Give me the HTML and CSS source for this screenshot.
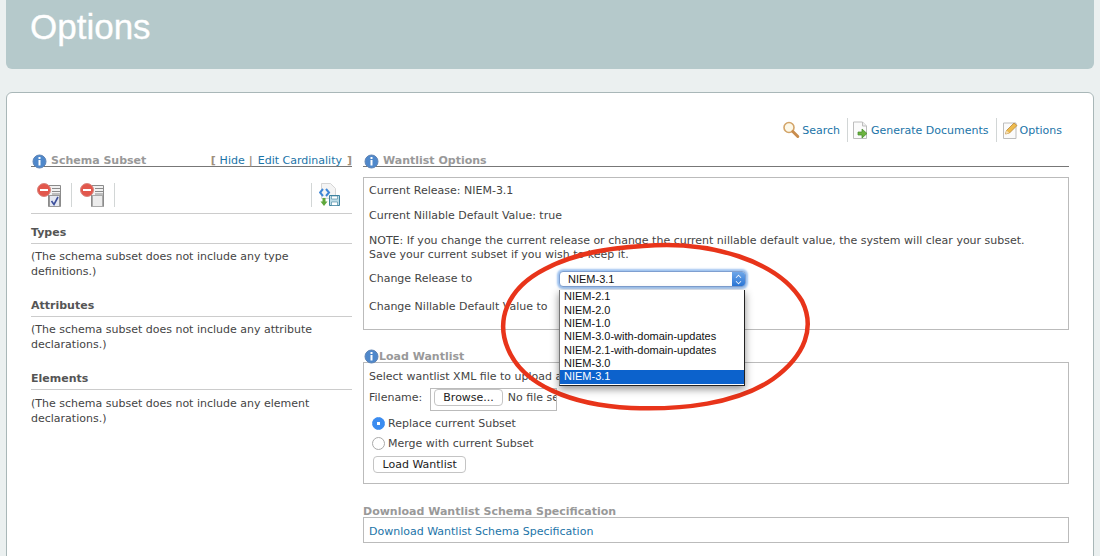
FILE: index.html
```html
<!DOCTYPE html>
<html lang="en">
<head>
    <meta charset="UTF-8">
    <title>Options</title>
    <link rel="stylesheet" href="styles.css">
</head>
<body>
    <div class="banner"><h1>Options</h1></div>

    <div class="panel">
        <div class="topnav">
            <a href="#" class="navlink">
                <svg width="18" height="18" viewBox="0 0 18 18"><circle cx="7" cy="6.500" r="5" fill="#fdf8e8" stroke="#d3a468" stroke-width="1.600"/><path d="M10.800 10.500l5 5" stroke="#c98d4e" stroke-width="3" stroke-linecap="round"/></svg>
                Search
            </a>
            <a href="#" class="navlink sep gen">
                <svg width="17" height="19" viewBox="0 0 17 19"><path d="M1.500 1h9l4 4v12.500h-13z" fill="#fbfbfb" stroke="#bdbdbd"/><path d="M10.500 1v4h4" fill="#eee" stroke="#bdbdbd"/><path d="M6 11h4V8l5 4.500L10 17v-3H6z" fill="#6cb33f" stroke="#3f8a2a" stroke-width=".7"/></svg>
                Generate Documents
            </a>
            <a href="#" class="navlink sep">
                <svg width="16" height="19" viewBox="0 0 16 19"><path d="M1.500 2h12.500v15.500H1.500z" fill="#fbfbfb" stroke="#bdbdbd"/><path d="M3.500 13l1-3.500L12 2l3 2.500-7.500 7.500z" fill="#eebb4d" stroke="#b9873a" stroke-width=".8"/><path d="M3.500 13l1-3.500 2.800 2.500z" fill="#f5dfb5"/></svg>
                Options
            </a>
        </div>

        <div class="columns">
            <div class="left">
                <div class="heading split">
                    <span class="title">
                        <svg class="info" viewBox="0 0 15 15"><circle cx="7.500" cy="7.500" r="6.500" fill="#4f88cb" stroke="#5f84b5"/><rect x="6.500" y="3" width="2" height="2" fill="#fff"/><rect x="6.500" y="6" width="2" height="5.500" fill="#fff"/></svg>
                        Schema Subset
                    </span>
                    <span class="bracket">[ <a href="#">Hide</a><span class="pipe">|</span><a href="#">Edit Cardinality</a><span class="close">]</span></span>
                </div>

                <div class="toolbar">
                    <span class="tool">
                        <svg width="25" height="24" viewBox="0 0 25 24"><path d="M11.500 2.500h12v21h-12z" fill="#f1f1f1" stroke="#8b8b8b"/><path d="M15 5.500h8M15 8.500h8M15 11h8" stroke="#8b8b8b"/><rect x="12.500" y="12.500" width="10" height="11" fill="#e4e8f2" stroke="#999"/><path d="M14.500 18l2.500 3.500L21 14" fill="none" stroke="#3c4f9c" stroke-width="1.600"/><circle cx="7" cy="7" r="6.500" fill="#e2574c" stroke="#d9867f"/><rect x="3" y="6" width="8" height="2" fill="#fff"/></svg>
                    </span>
                    <span class="tool">
                        <svg width="25" height="24" viewBox="0 0 25 24"><path d="M11.500 2.500h12v21h-12z" fill="#f1f1f1" stroke="#8b8b8b"/><path d="M15 5.500h8M15 8.500h8M15 11h8" stroke="#8b8b8b"/><rect x="12.500" y="12.500" width="10" height="11" fill="#ececec" stroke="#aaa"/><circle cx="7" cy="7" r="6.500" fill="#e2574c" stroke="#d9867f"/><rect x="3" y="6" width="8" height="2" fill="#fff"/></svg>
                    </span>
                    <span class="tool last">
                        <svg width="22" height="24" viewBox="0 0 22 24"><path d="M2.500 .5h9l5 5v10h-14z" fill="#f4f4f4" stroke="#d5d5d5"/><path d="M4 6L1 9.500 4 13M7 6l3 3.500L7 13" fill="none" stroke="#3f86d6" stroke-width="2"/><path d="M3.500 15h3v3.500h2L5 23 1.500 18.500h2z" fill="#5fa83c"/><path d="M10.500 12.500h10v10h-10z" fill="#bcdbe6" stroke="#3f83a0"/><path d="M12.500 13h6v3h-6zM12.500 19h6v3.500h-6z" fill="#fff" stroke="#3f83a0" stroke-width=".6"/></svg>
                    </span>
                </div>

                <h3 class="subhead">Types</h3>
                <p class="note">(The schema subset does not include any type definitions.)</p>
                <h3 class="subhead">Attributes</h3>
                <p class="note">(The schema subset does not include any attribute declarations.)</p>
                <h3 class="subhead">Elements</h3>
                <p class="note">(The schema subset does not include any element declarations.)</p>
            </div>

            <div class="right">
                <div class="heading">
                    <span class="title">
                        <svg class="info" viewBox="0 0 15 15"><circle cx="7.500" cy="7.500" r="6.500" fill="#4f88cb" stroke="#5f84b5"/><rect x="6.500" y="3" width="2" height="2" fill="#fff"/><rect x="6.500" y="6" width="2" height="5.500" fill="#fff"/></svg>
                        Wantlist Options
                    </span>
                </div>

                <div class="box options">
                    <p>Current Release: NIEM-3.1</p>
                    <p>Current Nillable Default Value: true</p>
                    <p>NOTE: If you change the current release or change the current nillable default value, the system will clear your subset.<br>Save your current subset if you wish to keep it.</p>
                    <div class="formrow">
                        <span class="rowlabel">Change Release to</span>
                        <div class="selectwrap">
                            <div class="select">
                                NIEM-3.1
                                <span class="stepper"></span>
                            </div>
                            <ul class="menu">
                                <li>NIEM-2.1</li>
                                <li>NIEM-2.0</li>
                                <li>NIEM-1.0</li>
                                <li>NIEM-3.0-with-domain-updates</li>
                                <li>NIEM-2.1-with-domain-updates</li>
                                <li>NIEM-3.0</li>
                                <li class="picked">NIEM-3.1</li>
                            </ul>
                        </div>
                    </div>
                    <div class="formrow second">
                        <span class="rowlabel">Change Nillable Default Value to</span>
                    </div>
                </div>

                <div class="heading bare load">
                    <span class="title tight">
                        <svg class="info" viewBox="0 0 15 15"><circle cx="7.500" cy="7.500" r="6.500" fill="#4f88cb" stroke="#5f84b5"/><rect x="6.500" y="3" width="2" height="2" fill="#fff"/><rect x="6.500" y="6" width="2" height="5.500" fill="#fff"/></svg>
                        Load Wantlist
                    </span>
                </div>
                <div class="box loadbox">
                    <p>Select wantlist XML file to upload a</p>
                    <div class="filerow">
                        <span class="filelabel">Filename:</span>
                        <div class="filebox">
                            <button type="button" class="btn">Browse...</button>
                            <span class="nofile">No file se</span>
                        </div>
                    </div>
                    <label class="radio"><span class="dot on"></span>Replace current Subset</label>
                    <label class="radio"><span class="dot"></span>Merge with current Subset</label>
                    <button type="button" class="btn wide">Load Wantlist</button>
                </div>

                <div class="heading bare download">
                    <span class="title">Download Wantlist Schema Specification</span>
                </div>
                <div class="box dlbox"><a href="#">Download Wantlist Schema Specification</a></div>
            </div>
        </div>
    </div>

    <svg class="scribble" width="330" height="180" viewBox="0 0 330 180">
        <path d="M150 7C217 1 285 22 309 62c13 26 4 54-29 78-36 25-92 31-142 29C78 166 30 146 15 110 3 82 13 50 52 30 82 14 116 9 150 7z" fill="none" stroke="#e8341a" stroke-width="4.500"/>
    </svg>
</body>
</html>
```

FILE: styles.css
```css
html, body {
    height: 100%;
    overflow: hidden;
}
body {
    font-family: 'DejaVu Sans', Verdana, sans-serif;
    font-size: 11px;
    color: #444;
    background-color: #ebf0f0;
    margin: 0;
    padding: 0 6px;
    position: relative;
}
a {
    color: #1b74a8;
    text-decoration: none;
}
p {
    margin: 0;
}
.banner {
    height: 69px;
    background: #b5c9cb;
    border-radius: 0 0 6px 6px;
}
h1 {
    margin: 0;
    padding: 7px 0 0 24px;
    font-family: 'Liberation Sans', Arial, sans-serif;
    font-size: 35px;
    font-weight: 400;
    line-height: 40px;
    color: #fff;
    -webkit-text-stroke: 0.3px #fff;
}
.panel {
    margin-top: 23px;
    height: 600px;
    padding: 0 24px;
    background: #fff;
    border: 1px solid #a9b7b8;
    border-radius: 6px;
}
.topnav {
    display: flex;
    justify-content: flex-end;
    align-items: center;
    height: 24px;
    margin-top: 25px;
    padding-right: 7px;
}
.navlink {
    display: flex;
    align-items: center;
    gap: 2px;
    height: 24px;
}
.navlink.sep {
    margin-left: 7px;
    padding-left: 5px;
    border-left: 1px solid #d2d6d6;
}
.navlink.gen {
    padding-left: 4px;
}
.columns {
    display: flex;
    gap: 11px;
    margin-top: 6px;
}
.left {
    width: 321px;
}
.right {
    width: 706px;
}
.heading {
    height: 18px;
    border-bottom: 1px solid #777;
    line-height: 26px;
}
.heading.split {
    display: flex;
    justify-content: space-between;
    align-items: flex-start;
}
.heading.bare {
    border-bottom: 0;
}
.title {
    display: inline-flex;
    align-items: center;
    gap: 4px;
    font-weight: 700;
    color: #999;
}
.title.tight {
    gap: 0;
}
.info {
    width: 15px;
    height: 15px;
    margin-left: 1px;
}
.bracket {
    font-weight: 700;
    color: #a08f7c;
}
.bracket a {
    font-weight: 400;
}
.pipe {
    margin: 0 5px 0 4px;
}
.close {
    margin-left: 5px;
}
.toolbar {
    display: flex;
    align-items: flex-end;
    height: 40px;
    padding-bottom: 6px;
    border-bottom: 1px solid #ccc;
}
.tool {
    display: flex;
    align-items: center;
    height: 24px;
    padding: 0 9px 0 8px;
    border-right: 1px solid #d2d6d6;
}
.tool:first-child {
    padding-left: 6px;
}
.tool.last {
    margin-left: auto;
    margin-right: 4px;
    padding: 0 7px;
    border-right: 0;
    border-left: 1px solid #d2d6d6;
}
.subhead {
    margin: 0;
    padding-top: 11px;
    height: 18px;
    line-height: 15px;
    font-size: 11px;
    font-weight: 700;
    color: #555;
    border-bottom: 1px solid #ccc;
}
.note {
    padding-top: 5px;
    height: 38px;
    line-height: 15px;
}
.note:last-child {
    padding-top: 6px;
}
.box {
    border: 1px solid #bbb;
    box-sizing: border-box;
    padding: 0 5px;
}
.options {
    height: 153px;
    margin-top: 10px;
    padding-top: 6px;
}
.options p {
    line-height: 14px;
    margin-bottom: 11px;
}
.formrow {
    display: flex;
    height: 16px;
    line-height: 16px;
    margin-top: -2px;
}
.formrow.second {
    margin-top: 12px;
}
.rowlabel {
    width: 190px;
    flex: none;
}
.selectwrap {
    position: relative;
    width: 187px;
    z-index: 3;
}
.select {
    position: relative;
    height: 14px;
    line-height: 14px;
    padding-left: 8px;
    font-family: 'Liberation Sans', Arial, sans-serif;
    font-size: 11px;
    color: #111;
    background: #fff;
    border: 1px solid #7f9fd0;
    border-radius: 4px;
    box-shadow: 0 0 2px 2px #9fc3f0;
}
.stepper {
    position: absolute;
    top: 0;
    right: 0;
    width: 13px;
    height: 14px;
    background: linear-gradient(#6ea6e8, #2a76d6);
    border-radius: 0 3px 3px 0;
}
.stepper::before,
.stepper::after {
    content: "";
    position: absolute;
    left: 4px;
    width: 4px;
    height: 4px;
    border-left: 1px solid #fff;
    border-top: 1px solid #fff;
}
.stepper::before {
    top: 3px;
    transform: scale(.8) rotate(45deg);
}
.stepper::after {
    top: 7px;
    transform: scale(.8) rotate(225deg);
}
.menu {
    position: absolute;
    top: 19px;
    left: 0;
    width: 184px;
    margin: 0;
    padding: 0.4px 0 1.600px;
    list-style: none;
    background: #fff;
    border: 1px solid #222;
    border-top: 0;
    border-left-color: #777;
    box-shadow: 0 3px 8px rgba(0,0,0,0.45);
    font-family: 'Liberation Sans', Arial, sans-serif;
    font-size: 11px;
    color: #111;
}
.menu li {
    height: 13.330px;
    line-height: 13.330px;
    padding-left: 4px;
}
.menu .picked {
    background: #0c62cc;
    color: #fff;
}
.heading.load {
    margin-top: 19px;
    height: 13px;
    line-height: 14px;
}
.loadbox {
    height: 122px;
    padding-top: 7px;
    line-height: 14px;
}
.filerow {
    display: flex;
    align-items: flex-start;
    gap: 8px;
    margin-top: 4px;
}
.filelabel {
    line-height: 20px;
}
.filebox {
    display: flex;
    align-items: flex-start;
    gap: 5px;
    width: 127px;
    height: 23px;
    box-sizing: border-box;
    padding: 0 3px;
    border: 1px solid #bbb;
    overflow: hidden;
    white-space: nowrap;
}
.nofile {
    line-height: 17px;
}
.btn {
    font-family: 'DejaVu Sans', Verdana, sans-serif;
    font-size: 11px;
    color: #222;
    height: 17px;
    padding: 0 8px;
    background: #fff;
    border: 1px solid #c4c4c4;
    border-radius: 4px;
    flex: none;
}
.radio {
    display: flex;
    align-items: center;
    height: 20px;
    box-sizing: border-box;
    padding-top: 2px;
    margin-left: 3px;
}
.filerow + .radio {
    margin-top: 2px;
}
.dot {
    width: 13px;
    height: 13px;
    box-sizing: border-box;
    margin: 0 3px 2px 0;
    border: 1px solid #aaa;
    border-radius: 50%;
    background: #fff;
}
.dot.on {
    background: radial-gradient(circle, #fff 0 1.500px, #3b8cf0 2px);
    border-color: #3b8cf0;
}
.btn.wide {
    display: block;
    margin: 3px 0 0 4px;
    padding: 0 8.500px;
}
.heading.download {
    margin-top: 20px;
    height: 13px;
    line-height: 16px;
}
.dlbox {
    height: 26px;
    line-height: 27px;
}
.scribble {
    position: absolute;
    top: 239px;
    left: 493px;
    z-index: 2;
    pointer-events: none;
}
```
